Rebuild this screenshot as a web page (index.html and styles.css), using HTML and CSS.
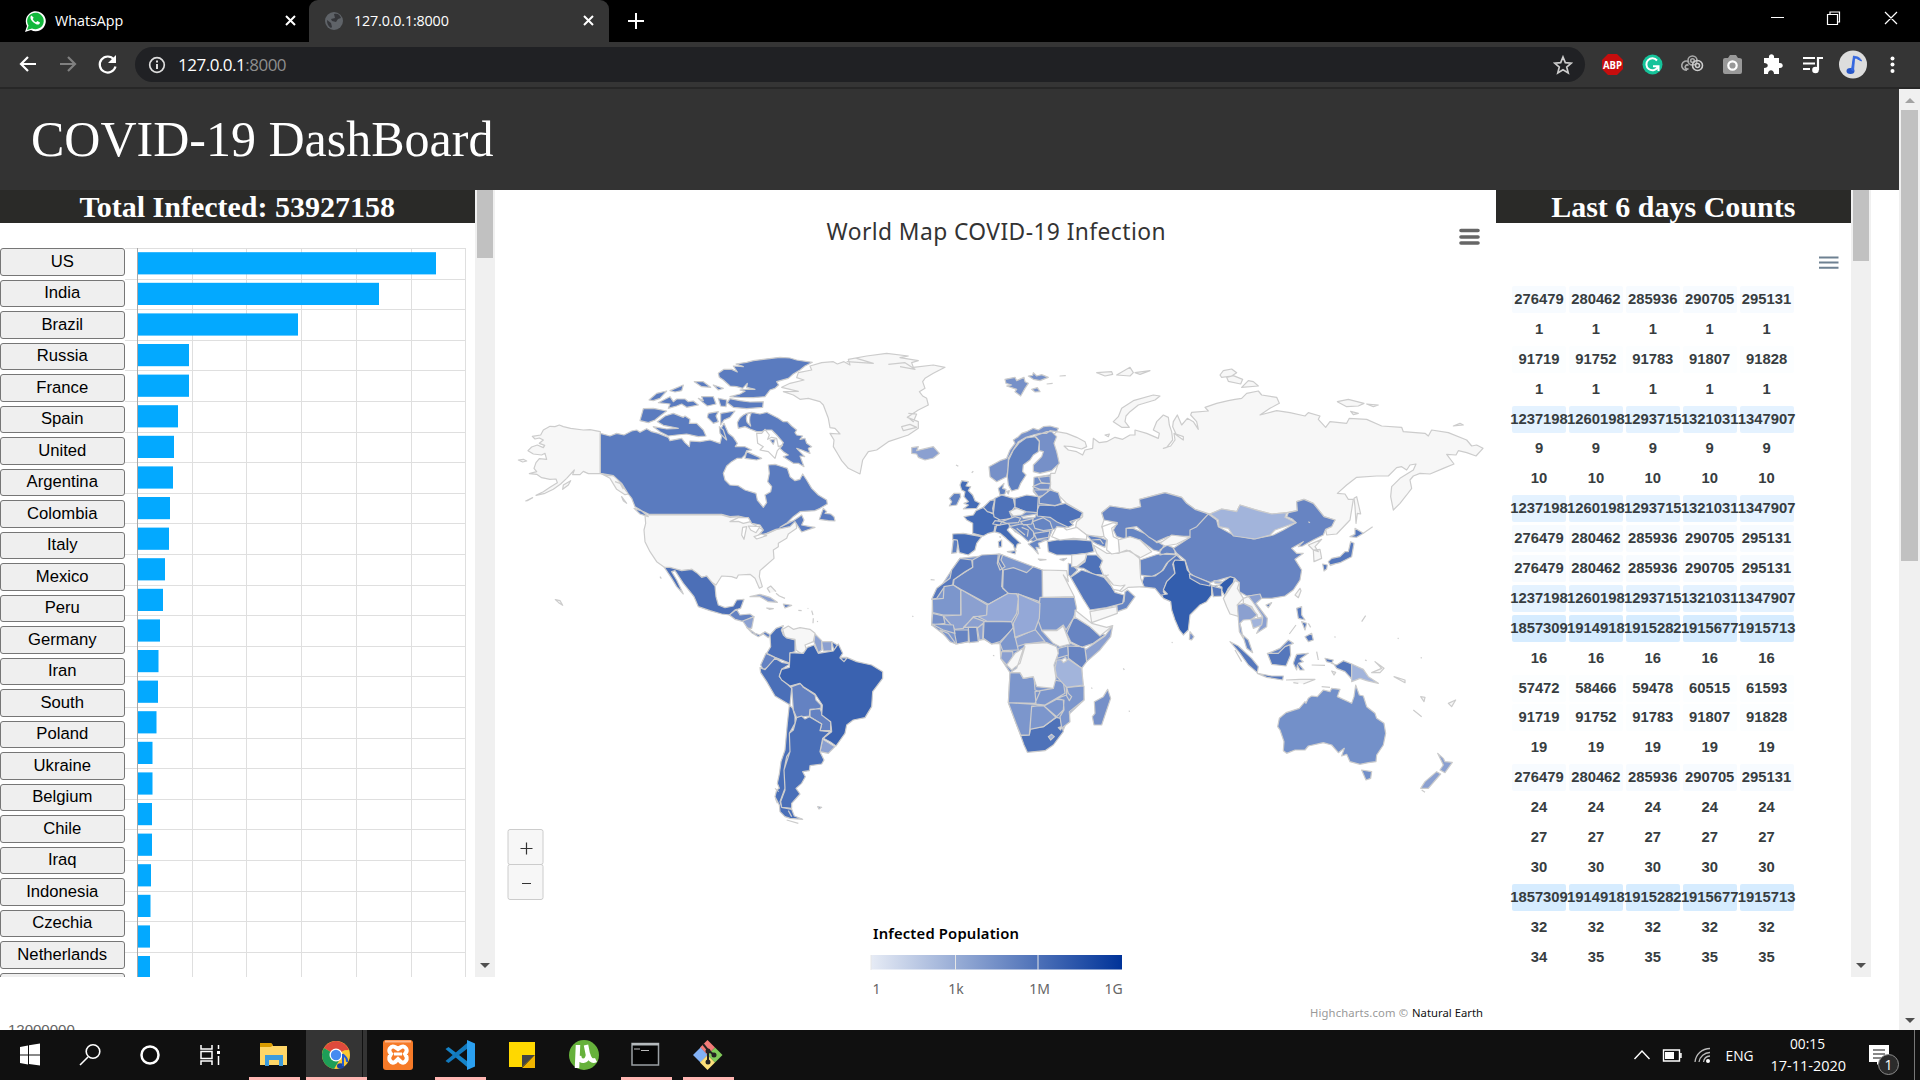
FILE: index.html
```html
<!DOCTYPE html>
<html lang="en">
<head>
<meta charset="utf-8">
<title>127.0.0.1:8000</title>
<link rel="stylesheet" href="styles.css">
</head>
<body>
<div class="tabs">
  <div class="tab first">
    <svg width="22" height="24" viewBox="0 0 22 24"><path d="M1 23l2-6A10 10 0 1 1 7 21z" fill="#fff"/><path d="M3 21l1.500-4.500A8.300 8.300 0 1 1 8 19.500z" fill="#12b83c"/><path d="M7.500 6.500c-2 1-1 4.500 2 7s6 3 6.500 0l-2.600-1.500-1.400 1.300c-1.400-.5-2.600-1.800-3.300-3.200l1-1.300z" fill="#fff"/></svg>
    <span>WhatsApp</span><svg class="x" width="11" height="11"><path d="M1 1l9 9M10 1l-9 9"/></svg>
  </div>
  <div class="tab active">
    <svg width="18" height="20" viewBox="0 0 18 20"><circle cx="9" cy="10" r="9" fill="#5f6368"/><path d="M9 3c4-1 6 1 7 4l-3 1-2 3-4-1-1-2 4-1zM2 9l4 3 1 4-1 1c-3-2-4-4-4-8z" fill="#35363a"/></svg>
    <span>127.0.0.1:8000</span><svg class="x" width="11" height="11"><path d="M1 1l9 9M10 1l-9 9"/></svg>
  </div>
  <svg class="plus" width="16" height="16"><path d="M8 0v16M0 8h16"/></svg>
  <svg class="win" width="140" height="20"><path d="M5 8.500h13M61.500 5.500h10v10h-10zM64 5.500v-2.500h9.500v10h-2M119 3l12 12M131 3l-12 12"/></svg>
</div>
<div class="toolbar">
  <svg class="nav" width="110" height="24"><g fill="none" stroke-width="2.200"><path stroke="#fff" d="M28 12H13M20 5l-7 7 7 7"/><path stroke="#808080" d="M52 12h15M60 5l7 7-7 7"/><path stroke="#fff" d="M106 7.500a8 8 0 1 0 1.500 7"/></g><path fill="#fff" d="M108 3v8h-8z"/></svg>
  <div class="omni">
    <svg width="18" height="18"><circle cx="9" cy="9" r="7.300" fill="none" stroke="#ddd" stroke-width="1.700"/><path d="M9 8v5M9 4.500v2" stroke="#ddd" stroke-width="2"/></svg>
    <span>127.0.0.1<i>:8000</i></span>
    <svg class="star" width="20" height="20" viewBox="0 0 20 20"><path d="M10 2l2.300 5.600 6 .5-4.600 3.900 1.500 5.900L10 14.700l-5.200 3.200 1.500-5.900L1.700 8.100l6-.5z" fill="none" stroke="#ccc" stroke-width="1.700"/></svg>
  </div>
  <svg class="ext" width="335" height="46">
    <path d="M23 12h9l6 6v9l-6 6h-9l-6-6v-9z" fill="#c70d0d"/><text x="27.500" y="26.700" font-size="11" font-weight="700" text-anchor="middle" fill="#fff" font-family="Open Sans" textLength="19" lengthAdjust="spacingAndGlyphs">ABP</text>
    <circle cx="67.500" cy="22.500" r="10" fill="#15c39a"/><path d="M72 18.500a6 6 0 1 0 .5 7M68 24.300h5.500V29" fill="none" stroke="#fff" stroke-width="2"/>
    <g fill="none" stroke="#aaa" stroke-width="1.600"><circle cx="107.500" cy="18.500" r="4.500"/><circle cx="107.500" cy="18.500" r="1.800"/><path d="M104 20a4.500 4.500 0 1 0-2 8M103.500 23.500a2 2 0 1 0 0 3"/><circle cx="112.500" cy="23.500" r="5" stroke="#ccc"/><circle cx="112.500" cy="23.500" r="2" stroke="#ccc"/></g>
    <path d="M138 18q0-2 2-2h3l2-3h6l2 3h1q3 0 3 2v12q0 2-2 2h-15q-2 0-2-2z" fill="#999"/><circle cx="147.500" cy="23.500" r="4.200" fill="none" stroke="#fff" stroke-width="2.200"/>
    <path d="M179 16h5c-1-5 6-5 5 0h5v5c5-1 5 6 0 5v6h-5c0-5-6-5-6 0h-4v-6c5 0 5-5 0-5z" fill="#fff"/>
    <path d="M218 16h12M218 21.500h12M218 27h7" stroke="#fff" stroke-width="2.200"/><circle cx="230.500" cy="28" r="3.300" fill="#fff"/><path d="M233 28V16h5" fill="none" stroke="#fff" stroke-width="2.200"/>
    <circle cx="268" cy="22.500" r="14" fill="#ddd"/><ellipse cx="265.500" cy="29" rx="4" ry="3" fill="#2857c8"/><path d="M268.500 29l1-13c3 0 4 2 7 3-2-5-6-4-8-5l-2 14z" fill="#3366e0" stroke="#3366e0"/>
    <g fill="#fff"><circle cx="307.500" cy="16.500" r="2"/><circle cx="307.500" cy="22.500" r="2"/><circle cx="307.500" cy="29" r="2"/></g>
  </svg>
</div>
<div class="page">
<div class="content">
  <div class="masthead">COVID-19 DashBoard</div>
  <div class="columns">
    <div class="panel left">
      <div class="body"><h2>Total Infected: 53927158</h2>
        <div class="bars"><div class="names" id="names"></div><svg id="bars" width="350" height="729"></svg></div>
      </div>
      <div class="scroll"><b></b><i class="down"></i></div>
    </div>
    <div class="mapbox">
<svg width="1001" height="840" viewBox="495 190 1001 840">
<defs><linearGradient id="scale"><stop offset="0" stop-color="#e6ebf5"/><stop offset="1" stop-color="#003399"/></linearGradient></defs>
<text class="title" x="826.500" y="240" textLength="339">World Map COVID-19 Infection</text>
<path d="M1462 230.500h17M1462 237h17M1462 243h17" stroke="#666" stroke-width="3.600" stroke-linecap="round" transform="translate(-1 0)"/>
<!-- North America -->
<g class="land" transform="translate(500 330) scale(.33333)">
<path class="n" d="M301,305L270,299 250,300 212,295 190,290 178,285 165,290 150,289 130,300 122,315 97,319 105,327 118,324 130,330 118,340 134,346 130,353 112,345 95,351 84,362 100,372 125,375 135,370 140,388 118,386 108,398 102,415 110,425 88,431 110,433 125,443 150,448 168,447 172,458 150,472 130,485 108,496 135,490 160,478 182,462 200,445 223,420 218,434 240,434 250,424 265,431 301,430Z M77,513L98,503 82,512Z M55,390L70,388 80,393 68,396Z M190,465L212,452 205,465 188,478Z M301,430L320,437 345,437 370,470 385,475 385,492 375,494 350,478 330,445Z M345,455L360,460 370,478 M355,450L380,485 M166,809L180,812 188,826 176,818Z M480,740L484,746"/>
<path class="n" d="M435,555L665,555 690,562 720,560 750,568 760,583 790,600 775,617 800,612 830,598 850,592 870,575 888,572 890,595 865,612 860,625 835,640 835,650 820,660 822,685 780,722 778,740 787,770 778,775 765,745 750,733 715,735 710,745 695,740 665,738 648,765 628,752 620,738 605,742 575,718 545,722 493,712 470,695 450,665 435,635 432,600 437,580Z"/>
<path fill="#5a7bbf" d="M301,310L330,318 350,310 372,315 395,303 410,300 420,307 440,296 455,305 475,310 505,322 510,332 545,325 555,338 568,350 570,333 600,335 630,330 660,340 665,320 660,300 672,280 685,310 700,322 712,340 706,350 735,350 755,360 740,362 735,375 725,385 712,385 695,395 680,408 670,430 675,450 690,465 715,467 735,480 768,490 772,510 790,532 800,518 795,495 812,485 815,470 803,455 808,430 805,405 825,403 840,408 862,415 870,440 885,452 900,448 908,432 920,450 935,475 955,495 980,510 982,522 960,535 945,542 900,545 880,560 862,578 840,592 880,572 905,555 912,570 905,585 930,590 945,592 905,606 898,595 885,575 870,590 845,595 828,598 800,610 775,617 790,600 780,585 755,580 745,565 715,558 690,560 665,553 447,553 430,545 405,530 395,505 385,492 365,460 340,437 301,430Z M958,568L970,535 980,545 975,550 992,552 1002,560 1005,573 985,572Z M402,535L425,543 445,560 420,552Z M365,500L380,520 370,512Z"/>
<path fill="#5a7bbf" d="M655,130L672,118 695,118 712,126 700,108 730,110 708,102 740,97 760,92 790,88 840,82 870,84 890,90 937,97 915,108 900,120 880,132 865,145 830,155 836,165 825,175 810,180 795,200 760,203 720,202 690,200 720,192 735,184 720,180 740,178 765,178 740,172 742,160 728,175 710,170 690,168 670,150 658,142Z M690,206L720,212 750,216 790,215 788,232 740,236 700,232 682,218Z M430,236L460,235 500,243 480,258 465,270 445,278 420,272Z M495,258L520,250 550,262 555,258 570,268 568,280 590,280 610,300 618,318 595,320 560,312 530,315 505,318 480,305 460,290 500,297 535,295 490,286 472,275Z M447,210L470,190 500,183 480,205 460,212Z M475,218L495,208 510,200 520,215 530,207 555,207 565,215 580,213 595,225 560,232 545,222 530,228 505,235 510,222Z M510,182L550,165 545,182 525,186Z M583,155L610,155 632,172 605,170Z M595,205L610,212 605,200 640,200 648,222 622,228 608,217Z M640,165L670,175 655,180Z M655,205L680,210 678,230 662,228Z M625,250L655,245 648,258 655,275 640,280 622,262Z M662,250L705,243 690,262 672,270 662,285Z M740,250L755,247 780,252 800,247 835,265 850,275 862,275 875,288 890,300 885,308 890,315 908,318 900,328 915,325 920,340 935,350 925,355 930,370 905,360 890,355 914,380 900,378 912,410 895,400 880,400 850,380 865,375 850,365 840,355 850,338 830,315 815,300 800,300 785,305 770,305 750,297 735,290 715,295 712,278Q720,258 740,250Z M740,365L785,385 770,390 735,385Z M658,290L670,300 680,330 660,310Z"/>
<path class="w" d="M770,310L785,310 795,298 808,315 803,328 815,322 830,325 835,350 848,345 832,362 825,385 805,365 780,360 790,350 773,340Z M690,575L715,563 745,563 752,575 730,580 715,574Z M728,592L740,590 732,628 725,615Z M745,588L780,590 768,608 752,600Z M762,620L785,612 800,617 770,627Z M745,250Q735,262 742,278L752,288Q745,268 753,250Z"/>
<path fill="#5a7bbf" d="M810,330L825,328 820,343Z"/>
<path class="n" d="M845,172L870,160 912,150 890,143 895,128 935,120 930,108 965,98 1000,95 1012,102 1032,95 1050,105 1045,88 1100,78 1160,70 1225,78 1200,83 1255,92 1235,98 1240,112 1300,105 1335,112 1300,130 1275,145 1268,155 1275,175 1258,185 1268,198 1280,205 1285,225 1255,240 1222,262 1255,275 1255,295 1225,315 1165,335 1130,360 1105,365 1088,390 1080,432 1045,415 1025,392 1015,375 1000,350 1002,330 990,310 1020,312 1005,295 990,293 985,265 970,225 960,215 925,205 900,208 880,195 850,185 895,184Z M1225,250L1250,252 1240,275 1222,260M1205,290L1230,283 1250,292 1210,302ZM1070,85L1120,100 1040,95M1165,103L1215,98 1245,118 1200,110"/>
<path fill="#8ba0d0" d="M1235,353L1255,350 1250,362 1275,356 1300,350 1318,370 1300,384 1275,390 1255,382 1250,372 1235,370Z"/>
<path fill="#4c6fb7" d="M493,712L510,712 545,722 575,718 590,728 605,742 620,738 645,768 648,800 655,825 675,833 700,828 710,810 732,808 722,835 705,840 690,855 665,852 630,842 595,830 582,800 550,760 525,722 515,725 530,750 550,792 530,770 515,745Z"/>
<path fill="#6482c2" d="M688,855L710,838 720,855 750,852 762,860 730,875 705,868Z"/>
<path fill="#8ba0d0" d="M728,873L762,860 755,895 743,895Z"/>
</g>
<!-- South America -->
<g class="land" transform="translate(740 570) scale(.33333)">
<path fill="#8ba0d0" d="M30,80L60,73 90,82 112,97 85,95 60,80Z M225,192L245,212 245,240 235,248 222,215Z M245,215L275,215 275,242 250,243Z M248,508L285,530 265,550 240,545Z"/>
<path fill="#6482c2" d="M130,102L155,106 135,114Z M80,114L100,116 88,118Z M20,172L45,190 60,195 75,185 92,195 85,203 70,192 55,200 35,188Z M155,350L182,340 190,352 225,375 228,390 243,405 243,416 210,418 208,438 170,443 160,420Z M210,420L240,415 248,435 272,455 272,482 240,482 245,462 210,440Z M78,250L105,262 100,280 70,300 62,285Z"/>
<path class="n" d="M128,178L145,168 160,178 180,173 210,178 225,190 220,215 195,225 200,240 185,252 168,240 165,208 135,203Z M90,68L82,55 92,48 108,65 M108,70L118,78 135,85"/>
<path fill="#4a6fb8" d="M108,175L130,167 124,180 130,195 140,204 165,210 165,245 150,250 150,280 105,262 80,250 92,230 90,195Z M275,215L292,225 282,242Z M60,293L75,299 105,265 125,277 150,282 125,298 118,320 145,345 155,355 150,405 105,378 80,335 62,308Z M170,443L185,438 195,447 208,440 245,462 240,482 270,485 248,505 240,545 252,570 245,582 210,587 208,602 188,605 196,620 185,640 168,655 180,672 155,700 155,715 125,712 122,695 135,660 132,600 140,560 150,545 148,490 160,480Z M148,405L158,415 165,440 165,460 148,490 150,545 132,600 135,655 120,695 125,712 155,718 163,738 188,748 150,745 135,740 120,725 118,705 105,680 110,660 118,655 112,640 118,612 123,575 135,540 142,460Z M105,655L116,665 M106,685L112,700 M140,750L175,760 M145,722L155,740 M233,710L245,712 237,717Z"/>
<path fill="#3a62b0" d="M150,248L190,250 202,232 222,225 235,250 280,243 295,222 308,250 300,262 320,262 350,275 395,285 428,305 428,325 398,365 395,410 375,443 340,450 320,465 315,490 288,528 270,515 250,505 275,485 272,455 245,435 247,405 225,372 190,350 180,340 150,348 125,330 118,318 125,298 148,292Z M300,264L322,263 312,275Z"/>
<path class="n" d="M215,122L219,135M220,145L219,160M175,121L185,122M203,115L205,116M232,153L233,156"/>
</g>
<!-- Europe, Africa and mainland Asia -->
<g class="land" transform="translate(900 340) scale(.33333)">
<path fill="#6f8cc6" d="M285,475L340,475 415,470 485,490 548,518 505,562 458,568 445,600 400,605 345,575 325,552 285,558 250,502Z M402,412L465,402 452,430 450,450 475,458 418,475 400,455Z"/>
<path fill="#7c96cc" d="M98,778L155,690 180,655 300,642 427,690 523,772 520,835 500,905 550,925 545,985 552,1080 510,1120 490,1170 470,1132 362,1187 325,1088 330,998 302,955 300,910 275,912 252,898 168,912 95,855Z"/>
<path class="n" d="M470,275L500,280 530,292 555,305 560,320 545,327 515,320 492,318 505,330 530,335 548,345 555,330 578,325 580,295 598,308 620,305 645,292 668,298 690,285 705,285 705,270 740,280 775,295 778,280 760,270 770,245 790,225 805,232 808,255 815,275 818,300 800,322 790,325 812,318 825,300 822,280 850,300 850,290 828,282 818,260 820,245 832,225 845,255 862,235 880,245 895,268 890,245 872,225 875,217 925,213 915,202 950,190 985,182 1005,178 1025,175 1040,160 1075,153 1085,165 1130,172 1138,190 1110,205 1080,225 1130,212 1170,218 1215,228 1225,218 1260,228 1255,238 1277,262 1290,245 1340,250 1348,235 1400,238 1445,258 1505,262 1510,275 1575,280 1585,288 1595,270 1645,278 1700,300 1715,318 1730,315 1749,325 1728,348 1700,338 1675,332 1668,345 1640,343 1662,372 1630,385 1590,402 1560,400 1540,408 1530,420 1535,445 1520,465 1500,490 1480,510 1472,470 1475,440 1500,415 1540,390 1548,372 1530,375 1520,390 1505,380 1490,383 1465,408 1430,408 1370,412 1340,435 1312,460 1335,462 1345,478 1360,478 1350,540 1310,582 1280,585 1277,568 1305,540 1272,530 1240,490 1212,478 1190,485 1192,512 1160,518 1115,522 1075,512 1020,495 1010,515 965,507 930,522 885,508 860,490 845,472 795,458 720,478 722,500 690,507 630,498 605,518 612,540 605,560 615,590 600,590 560,585 527,560 530,545 548,530 548,518 500,490 480,470 450,445 452,400 465,400 475,370 465,330 455,290Z M590,98L635,95 638,103 615,108Z M650,105L690,82 700,98 690,108Z M705,98L750,92 720,103Z M640,245L655,230 665,205 700,182 760,165 780,168 765,180 715,195 690,215 678,228 675,245 688,262 665,262Z M615,285L628,282 625,290Z M480,108L496,107Z"/>
<path class="n" d="M960,105L970,92 995,87 1010,98 995,108 965,112Z M980,112L1000,107 1028,118 1022,132 985,124Z M1025,142L1045,122 1060,125 1075,138Z M1312,185L1345,178 1392,190 1375,198 1340,200Z M1400,192L1435,195 1420,200Z M1352,214L1375,220 1360,224Z M1660,258L1680,250 1690,255Z M1362,475L1370,470 1382,522 1372,520 1368,550 1365,500Z M1225,615L1265,598 1245,620 1255,635 1240,630Z M1240,630L1260,628 1265,655 1242,665Z M1185,765L1200,745 1203,752 1195,773Z"/>
<path fill="#8ba0d0" d="M638,857L632,890 600,930 560,965 555,930 590,905 615,888Z M182,748L262,795 260,828 220,830 190,865 165,868 130,828 183,825Z M305,935L338,935 340,960 320,975 302,955Z M345,895L405,868 435,905 375,912 350,920Z M232,865L250,850 248,898 238,900Z M190,862L220,832 255,845 235,862Z"/>
<path fill="#7690c8" d="M315,118L345,112 350,122 372,112 375,125 385,130 375,145 362,168 345,155 350,148 320,138 335,135 318,130Z M385,108L398,106 400,98 410,108 425,104 445,112 420,122 400,118Z M395,148L412,143 420,155 405,156Z M267,380L300,362 320,355 330,330 345,310 340,300 355,290 365,280 380,275 400,265 415,270 430,260 450,258 475,265 470,275 450,272 440,280 420,280 400,285 378,292 355,305 340,330 325,355 325,385 320,410 290,425 270,410Z M405,288L440,275 455,275 470,290 462,310 470,335 478,370 455,392 420,400 400,395 400,375 425,350 430,335 418,332 418,303Z M415,412L450,408 452,430 425,430Z M398,440L425,428 452,432 448,448 420,448Z M400,450L445,450 438,465 415,470Z M870,875L882,890 875,900 868,898Z M623,1048L632,1075 605,1155 582,1155 577,1130 585,1120 583,1085 610,1070Z M98,820L130,828 135,850 95,855Z"/>
<path fill="#5f80c0" d="M322,410L326,360 340,330 358,308 378,294 405,290 418,305 415,335 400,345 390,360 370,375 368,395 378,405 362,430 355,447 335,453 325,435Z M295,445L312,430 308,445 318,448 315,462 300,465Z M320,455L328,452 325,462Z M148,475L162,460 180,460 182,470 170,495 148,498 155,485Z M160,598L175,600 170,638 155,640Z"/>
<path fill="#456cb6" d="M180,435L185,422 205,425 198,438 212,440 205,452 218,465 225,482 240,490 230,505 190,507 205,495 192,490 205,485 192,470 195,455 185,450Z M192,530L220,525 228,512 250,502 275,520 298,532 290,555 285,575 265,580 250,588 218,580 218,550 200,540Z M158,582L190,580 245,590 230,610 225,630 205,645 178,638 172,600 158,598Z M282,575L285,558 325,550 330,560 322,570 340,590 362,610 352,612 345,632 340,615 318,595 300,580Z M322,635L348,632 345,642Z M295,605L305,600 305,620 297,622Z M298,590L303,592"/>
<path fill="#4e72b9" d="M285,475L305,465 340,475 345,500 330,520 338,535 300,540 282,530 278,505Z M250,502L270,482 285,478 280,520 262,515Z M345,475L380,465 415,470 412,518 375,515 345,502Z M278,552L285,542 305,545 300,555Z M412,510L418,495 465,497 495,490 548,518 540,535 510,545 520,555 505,562 470,545 450,532 412,528Z M442,605L470,600 520,598 575,603 582,635 560,640 520,645 470,645 445,635Z M560,645L590,645 608,662 600,680 610,705 580,703 550,685 530,683 555,665Z M362,1187L388,1185 392,1165 430,1160 470,1132 482,1135 490,1175 460,1215 435,1232 382,1237 372,1215Z"/>
<path fill="#6685c3" d="M418,475L450,450 475,458 485,490 465,497 418,490Z M305,545L345,530 362,535 355,548 320,550Z M362,545L400,535 395,552 370,555Z M398,545L430,533 450,545 458,568 430,572 405,565Z M402,580L450,573 445,592 410,598Z M328,560L362,552 380,555 400,575 402,590 385,605 368,590 345,570Z M350,565L375,585M365,562L385,570 382,590M385,612L410,600 440,600 415,610 420,625 408,622 415,642 400,625Z M560,585L600,592 620,600 615,622 590,612 575,603Z M575,600L600,598 610,612M505,670L515,672 533,690 512,710 505,705Z M650,795L672,785 675,755 683,750 705,770 680,805 652,815Z M720,660L775,642 840,645 800,670 785,695 755,710 722,705Z M678,565L700,565 745,585 770,608 800,605 780,635 760,630 720,600 678,595Z M780,630L800,615 825,625 825,642 800,640 780,645Z M480,658L500,655 490,662Z M415,657L438,659 420,661Z"/>
<path fill="#6784c2" d="M605,518L630,498 690,507 722,500 718,478 795,458 845,472 860,490 885,508 925,522 890,560 870,570 870,588 805,590 770,605 745,590 710,560 678,565 678,598 650,590 640,570 652,548 612,540Z M925,522L950,540 955,560 1000,585 1060,597 1120,585 1150,570 1188,548 1178,538 1160,530 1165,518 1192,512 1190,485 1212,478 1240,490 1272,530 1305,540 1295,560 1277,568 1270,585 1240,600 1208,618 1195,620 1210,605 1175,625 1190,640 1210,640 1185,658 1205,690 1200,720 1180,750 1155,768 1115,775 1085,775 1070,765 1040,768 1018,755 1018,730 1005,715 985,712 930,728 870,705 855,660 830,640 820,625 870,592 870,570 890,560Z M218,660L245,645 300,642 295,665 308,690 305,740 325,760 265,793 182,748 160,735 162,718 218,682Z M295,642L308,645 303,660 315,680 300,690 292,670Z M310,690L340,683 380,698 400,680 427,690 427,788 355,762 325,760 308,745Z M520,835L550,833 575,865 615,885 580,910 545,922 512,905 500,880Z M503,918L545,920 555,925 560,965 545,985 505,955Z M252,845L335,845 340,865 300,905 275,912 250,895Z M205,862L230,862 235,905 208,908Z M162,870L205,870 205,905 170,912Z"/>
<path fill="#5778bc" d="M512,712L545,690 612,712 635,740 645,757 672,765 668,790 620,803 570,810 548,775Z M722,740L732,710 765,708 790,690 805,665 830,645 845,660 818,672 825,700 800,725 790,755 805,778 785,770 765,745Z M180,655L215,660 218,682 195,695 160,720 158,735 130,745 110,775 95,778 110,745 150,715 155,690Z"/>
<path fill="#7c96cc" d="M97,778L130,775 132,740 160,735 182,750 182,825 130,825 98,818Z M420,772L523,772 530,805 520,835 498,870 490,855 470,870 425,870 412,835 418,790Z M475,925L503,918 505,945 470,955Z M95,852L160,855 165,880 130,870Z M120,870L145,880 168,912 150,905Z M300,910L340,862 345,890 355,930 308,932Z M330,998L360,998 370,1015 402,1010 405,1050 420,1055 405,1090 325,1088Z M405,1055L460,1045 460,1020 490,1025 495,1060 435,1095 408,1092Z M500,1042L552,1038 552,1080 508,1115 510,1145 485,1165 480,1130 492,1110 490,1080 470,1075 500,1065Z M432,1098L470,1078 492,1080 490,1110 470,1130Z M395,1098L432,1098 468,1132 430,1160 390,1168Z M325,1088L430,1095 395,1100 388,1185 362,1185 348,1150Z M498,1035L505,1060 515,1070 508,1082 500,1068Z"/>
<path fill="#94a8d7" d="M262,795L325,760 350,762 355,775 350,820 335,845 260,843 235,830 260,825Z M355,762L420,790 418,835 405,870 345,892 340,850 355,820Z"/>
<path fill="#a2b4db" d="M470,960L505,958 545,985 550,1035 500,1042 470,1010 465,985Z M445,1190L455,1183 463,1190 452,1200Z M930,522L965,507 1010,515 1020,495 1075,512 1115,522 1160,518 1155,532 1188,548 1125,570 1110,585 1065,597 1000,588 985,565 957,560 955,540Z"/>
<path class="n" d="M328,515L350,505 378,515 365,525 340,528Z M365,530L410,522 405,532 370,535Z M515,645L560,640 555,660 530,680 515,680Z M570,815L650,800 652,820 575,848Z M580,615L620,640 655,640 680,630 718,650 722,715 732,740 685,742 665,755 640,745 615,708 625,705 612,708 600,680 608,662 590,640Z M655,600L690,590 720,600 755,635 718,655 690,632 658,638Z M780,610L815,585 870,592 830,612 795,618Z M427,690L500,692 505,725 490,705 523,770 428,772Z M525,810L575,850 620,862 638,857 600,888 570,860 525,832Z M425,872L470,872 490,858 500,885 510,912 480,920 460,910Z M375,912L440,908 470,920 475,940 462,975 468,1015 460,1045 410,1040 400,1010 370,1015 360,998 330,998 350,985Z M320,975L345,940 375,920 360,970 335,990Z"/>
<path class="w" d="M615,705L640,735 662,738 675,735 660,752 640,748Z"/>
<path fill="#335eae" d="M820,668L825,660 855,662 862,690 870,700 905,725 935,735 945,745 970,724 990,710 1003,714 1000,728 985,745 974,767 965,752 966,742 955,735 935,738 935,765 920,785 900,795 870,825 865,870 850,885 838,870 825,840 815,810 812,785 790,775 785,765 802,762 790,750 800,725 825,700Z"/>
<path fill="#5778bc" d="M868,702L930,728 930,738 900,732 870,715Z M935,738L965,745 965,768 940,770Z"/>
<path fill="#a2b4db" d="M942,722L965,724 962,731 945,730Z"/>
<path class="w" d="M607,560L640,548 652,552 635,565 640,590 655,598 658,638 635,642 620,630 622,600 612,590Z M455,590L470,560 490,562 500,570 530,562 560,585 560,598 520,595 480,600Z"/>
<path class="n" d="M92,719L104,720M37,828L40,830M279,946L283,948M670,985L673,990M686,1113L690,1114M574,1043L577,1046M815,907L818,908M168,375L175,379M215,398L220,394M440,132L458,130M484,960L497,952 500,962 490,968Z M475,1163L485,1160 482,1170Z"/>
</g>
<!-- East Asia and Oceania -->
<g class="land" transform="translate(1180 340) scale(.33333)">
<path fill="#5577bc" d="M445,665L455,655 480,650 495,635 505,635 512,605 522,610 515,650 480,668 450,675Z M428,672L442,675 440,687 432,693Z M450,677L465,672M510,590L525,583 525,565 550,580 530,592Z M150,905L175,918 215,955 235,980 232,998 205,975 180,940Z M232,1000L275,1008 310,1008 308,1020 260,1012Z M262,940L290,940 315,918 330,915 332,945 318,978 275,973Z M345,955L350,943 385,940 360,957 370,965 355,970 372,990 360,990 352,975 350,990 340,970Z M435,955L460,960 455,970 470,975 490,962 515,972 515,1017 495,995 470,985 460,970 440,965Z M350,805L365,800 365,825 375,840 355,835Z M365,845L380,850 375,870Z M385,850L392,862M375,890L395,880 400,900 385,905Z M258,795L275,788 265,803Z M385,545L390,548"/>
<path class="n" d="M130,775L150,745 165,722 178,727 172,745 190,775 172,795 178,830 150,822 140,800Z M190,775L205,770 220,785 248,830 235,835 215,800 190,790Z M550,580L578,560 M328,882L348,855M318,1020L360,1018 405,1018 370,1032M340,1028L355,1030M395,975L435,976M410,935L415,960M455,993L467,997 462,1005ZM585,965L612,985 600,998 575,998 605,985ZM642,1010L675,1020 675,1028ZM722,1070L735,1072 732,1085ZM700,1110L725,1130M805,1090L827,1080 815,1100ZM545,845L557,827M463,890L467,892M722,953L726,954M653,894L656,896M175,838L185,870M165,930L185,965M555,960L560,962M425,1040L450,1042M725,1350L735,1357"/>
<path fill="#8ba0d0" d="M172,795L190,790 210,800 232,825 215,838 190,840 180,850 190,895 178,875Z M205,768L240,762 245,775 228,790 262,835 260,860 230,880 245,850 248,830 225,795Z M773,1240L790,1255 795,1265 817,1267 795,1298 780,1290 790,1275Z M770,1295L782,1302 745,1345 722,1345 735,1325Z"/>
<path fill="#a2b4db" d="M212,838L248,833 245,855 220,865Z M515,972L550,988 565,1010 595,1030 560,1022 540,1015 515,1025Z"/>
<path fill="#6685c3" d="M188,885L205,900 218,938 200,925Z M265,940L300,925 325,900 340,910 315,920 295,940Z"/>
<path fill="#7390c9" d="M298,1135L318,1118 358,1105 375,1085 378,1090 385,1075 395,1068 412,1070 430,1050 450,1055 455,1045 480,1048 472,1070 515,1090 522,1070 527,1035 538,1065 550,1068 560,1100 585,1120 590,1135 612,1150 617,1180 610,1215 590,1245 588,1265 565,1268 540,1273 510,1265 500,1243 485,1248 493,1225 475,1238 455,1215 430,1208 385,1218 375,1230 345,1230 320,1240 310,1232 312,1205 300,1170 293,1160Z M545,1290L575,1295 572,1315 558,1320Z"/>
</g>
<!-- Zoom buttons -->
<rect x="508" y="829.500" width="35" height="35" rx="2" fill="#f7f7f7" stroke="#ccc"/><rect x="508" y="864.500" width="35" height="35" rx="2" fill="#f7f7f7" stroke="#ccc"/>
<path d="M520.500 848.500h12M526.500 842.500v12M522 883.500h9" stroke="#333" stroke-width="1.200"/>
<!-- Colour axis -->
<text class="legend" x="873" y="939" textLength="146">Infected Population</text>
<rect x="871" y="955" width="251" height="14.500" fill="url(#scale)"/><path d="M955.500 955v15M1038 955v15M871 955v15" stroke="#e6e6e6"/>
<g class="tick"><text x="876.500" y="994">1</text><text x="956" y="994">1k</text><text x="1039.500" y="994">1M</text><text x="1113.500" y="994">1G</text></g>
<g class="credit"><text x="1310" y="1017" textLength="98" fill="#999">Highcharts.com ©</text><text x="1412" y="1017" textLength="71" fill="#111">Natural Earth</text></g>
</svg>
    </div>
    <div class="panel right">
      <div class="body"><h2>Last 6 days Counts</h2>
        <svg class="menu" width="20" height="14"><path d="M0 1.500h19.500M0 6.500h19.500M0 11.700h19.500" stroke="#6e8192" stroke-width="2"/></svg>
        <div class="heat" id="heat"></div>
      </div>
      <div class="scroll"><b></b><i class="down"></i></div>
    </div>
  </div>
  <div class="cut">12000000</div>
</div>
<div class="pagescroll"><i class="up"></i><b></b><i class="down"></i></div>
</div>
<div class="taskbar">
<svg width="760" height="50">
<rect x="306" width="61" height="50" fill="#343434"/><rect x="362" width="1" height="50" fill="#111"/>
<g fill="#ffb6b2"><path d="M249 47h51v3h-51zM306 47h61v3h-61zM435 47h51v3h-51zM621 47h51v3h-51zM683 47h51v3h-51z"/></g>
<path fill="#fff" d="M20 17l8-1.500v9h-8zM29 15.300l11-1.800v11H29zM20 25.500h8v9L20 33zM29 25.500h11v10L29 34z"/>
<g fill="none" stroke="#fff"><circle cx="93" cy="21.500" r="6.800" stroke-width="1.600"/><path d="M88 27l-8 8" stroke-width="1.600"/><circle cx="150" cy="25" r="8.500" stroke-width="2.500"/><path d="M201 15v4h11v-4M201 35v-4h11v4M201 21.500h11v7h-11zM218.500 15v4M218.500 26v9" stroke-width="1.500"/></g><path fill="#fff" d="M217 21h3v3h-3z"/>
<path d="M260 13h11l2 3h14v19h-27z" fill="#ffd667"/><path d="M260 13h11l2 2-2 2h-11z" fill="#d99b00"/><path d="M265 36V25h18v11h-4v-6h-10v6z" fill="#3c9bdc"/>
<circle cx="336" cy="25" r="14" fill="#fbc934"/><path d="M336 25L323.900 18A14 14 0 0 1 348.100 18z" fill="#de4a3c"/><path d="M336 25L323.900 18A14 14 0 0 0 334 38.900l6-10z" fill="#1e9e58"/><path d="M336 18h12.100l.5 2-12 .5z" fill="#de4a3c"/><circle cx="336" cy="25" r="6.500" fill="#fff"/><circle cx="336" cy="25" r="5.200" fill="#468af0"/><ellipse cx="340.500" cy="36" rx="3.500" ry="2.800" fill="#1c45a0"/><path d="M343 36V24c1 3 5 3 4 8" fill="none" stroke="#245bd1" stroke-width="2"/>
<rect x="383" y="10" width="30" height="30" rx="3" fill="#f67a28"/><path d="M385 11.500h26" stroke="#ffb98c" stroke-width="2"/><path d="M391 24c-4-4 0-9 4-7l3 2 3-2c4-2 8 3 4 7 4 5 0 10-4 8l-3-3-3 3c-4 2-8-3-4-8z" fill="none" stroke="#fff" stroke-width="4"/><path d="M394 24h8" stroke="#fff" stroke-width="3"/>
<path d="M445.500 19l3-2 21 16v6z" fill="#1583c8"/><path d="M445.500 31l3 2 21-16v-6z" fill="#1279bd"/><path d="M467 10l8 3.500v23L467 40z" fill="#2ba0f0"/>
<path d="M509 12h26v13l-13 12h-13z" fill="#ffd800"/><path d="M522 37V25h13z" fill="#444"/><path d="M535 25v13h-13z" fill="#f0b400"/>
<circle cx="584" cy="25" r="15" fill="#66b13b"/><path d="M578 15l-1 23M579 26c1 7 8 6 9-1l-2-10M588 24c1 5 4 8 8 6" fill="none" stroke="#fff" stroke-width="4.500"/>
<rect x="632" y="13.500" width="26.500" height="21.500" fill="#050505" stroke="#9aa0a4" stroke-width="1.500"/><path d="M632 13h27v2.500h-27z" fill="#b5babd"/><path d="M634 19h6M641 20.500h8" stroke="#bbb"/>
<path d="M707.500 10l7.500 7.500-7.500 7.500-7.500-7.500z" fill="#f37b78"/><path d="M700.500 17.500l7 7.500-7 7.500-7.500-7.500z" fill="#82b1f5"/><path d="M715 17.500l7.500 7.500-7.500 7.500-7.500-7.500z" fill="#80c95a"/><path d="M707.500 25l7.500 7.500-7.500 7.500-7.500-7.500z" fill="#fce07a"/><path d="M703 14l5 6v12M708 20l6 5" fill="none" stroke="#222" stroke-width="2"/><circle cx="708" cy="21" r="2.500" fill="#222"/><circle cx="714" cy="25" r="2.500" fill="#222"/><circle cx="708" cy="32" r="2.500" fill="#222"/>
</svg>
<svg class="tray" width="290" height="50">
<path d="M4.500 29l7.500-8 7.500 8" fill="none" stroke="#fff" stroke-width="1.400"/><path d="M33.500 20h16v11h-16zM51 23v5" fill="none" stroke="#fff" stroke-width="1.400"/><path fill="#fff" d="M35 22h9v7h-9z"/>
<path d="M65 32a15 15 0 0 1 15-13.500M69 32a11 11 0 0 1 11-9.500M73.500 32a7 7 0 0 1 6.500-6" fill="none" stroke="#bbb" stroke-width="1.300"/><circle cx="78" cy="31" r="2" fill="#fff"/>
<g font-family="Open Sans, sans-serif" fill="#fff"><text x="95.500" y="31" font-size="15" textLength="28" lengthAdjust="spacingAndGlyphs">ENG</text><text x="160" y="18.500" font-size="15" textLength="35" lengthAdjust="spacingAndGlyphs">00:15</text><text x="140.500" y="41.300" font-size="15" textLength="75.500" lengthAdjust="spacingAndGlyphs">17-11-2020</text>
<path d="M239 15h20v17h-9l-3 3v-3h-8z"/><path d="M243 20h12M243 24h12M243 28h8" stroke="#111"/><circle cx="258.500" cy="34.500" r="10" fill="#2b2b2b" stroke="#8c8c8c"/><text x="258.500" y="39.500" font-size="14" text-anchor="middle">1</text></g><path d="M284.500 0v50" stroke="#777"/>
</svg>
</div>
<script src="app.js"></script>
</body>
</html>
```
FILE: styles.css
```css
* { box-sizing: border-box; }
body { margin: 0; width: 1920px; height: 1080px; overflow: hidden; background: #fff; display: flex; flex-direction: column; }
svg { display: block; flex: none; }
.tabs { height: 42px; background: #000; display: flex; color: #fff; font: 14.3px "Open Sans", sans-serif; }
.tab { display: flex; align-items: center; height: 42px; padding-bottom: 1px; }
.tab span { flex: 1; }
.tab.first { width: 309px; padding: 0 13.5px 1px 24px; gap: 9px; }
.tab.active { width: 300px; padding: 0 15px 1px 16px; gap: 11px; background: #353535; border-radius: 9px 9px 0 0; }
.tab.active span { letter-spacing: -.15px; }
.x { stroke: #fff; stroke-width: 2; }
.plus { margin: 13px 0 0 19px; stroke: #fff; stroke-width: 2; }
.win { margin: 9px 14px 0 auto; width: 140px; fill: none; stroke: #fff; stroke-width: 1.2; }
.toolbar { height: 47px; background: #353535; border-bottom: 2px solid #272727; display: flex; }
.nav { margin: 10px 0 0 8px; }
.omni { width: 1450px; height: 35px; margin: 5px 0 0 17px; border-radius: 18px; background: #202124; display: flex; align-items: center; padding: 0 12.5px 0 13px; gap: 12px; color: #fff; font: 17px "Open Sans", sans-serif; }
.omni span { flex: 1; letter-spacing: -.5px; }
.omni i { font-style: normal; color: #8e8e8e; }
.page { height: 941px; display: flex; overflow: hidden; }
.content { width: 1899px; height: 941px; overflow: hidden; }
.masthead { height: 101px; background: #333; color: #fff; font: 50px/100px "Liberation Serif", serif; padding: 0 0 0 31px; }
.columns { display: flex; height: 840px; }
.panel { height: 787px; display: flex; overflow: hidden; }
.left { width: 495px; }
.right { width: 375px; }
.body { flex: 1; overflow: hidden; }
h2 { margin: 0; height: 33px; background: #2a2a28; color: #fff; text-align: center; font: bold 30px/33px "Liberation Serif", serif; }
.scroll { width: 20.5px; background: #f0f0f0; position: relative; padding: 0 2px; }
.scroll b { display: block; height: 68px; background: #c1c1c1; }
.right .scroll b { height: 71px; }
.down, .up { display: block; width: 0; height: 0; border: 5px solid transparent; border-top-color: #505050; border-bottom: 0; }
.scroll .down { position: absolute; left: 5px; bottom: 9px; }
.up { border-top: 0; border-bottom: 5px solid #a3a3a3; }
.pagescroll { width: 21px; background: #f0f0f0; display: flex; flex-direction: column; align-items: center; padding: 9px 0 7px; }
.pagescroll b { width: 17px; height: 451px; margin-top: 7px; background: #c1c1c1; }
.pagescroll .down { margin-top: auto; }
.bars { margin-top: 25px; display: flex; }
.names { width: 125px; display: flex; flex-direction: column; gap: 4px; }
.name { height: 27.5px; flex: none; border: 1.25px solid #767676; border-radius: 3px; background: #efefef; color: #000; font: 16.67px "Liberation Sans", sans-serif; padding: 0; }
.mapbox { width: 1001px; height: 840px; }
.right .body { width: 354px; }
.menu { margin: 33px 0 0 323px; }
.heat { margin: 16px 0 0 16px; display: grid; grid-template-columns: repeat(5, 54px); column-gap: 2.9px; row-gap: 2.9px; }
.heat span { position: relative; height: 27px; display: flex; justify-content: center; font: bold 14.8px/27px "Liberation Sans", sans-serif; color: #373d3f; border-radius: 2px; white-space: nowrap; }
.a { background: #f7fbff; }
.b { background: #fcfeff; }
.c { background: #e4f2ff; }
.d { background: #d6ecff; }
.cut { position: relative; margin: -8px 0 0 8px; font: 15px/15px "Liberation Sans", sans-serif; color: #666; }
.title { font: 22.8px "Noto Sans", sans-serif; fill: #333; }
.legend { font: 600 14.8px "Noto Sans", sans-serif; }
.tick { font: 14px "Noto Sans", sans-serif; fill: #666; text-anchor: middle; }
.credit { font: 11.25px "Noto Sans", sans-serif; }
.land path { stroke: #ccc; stroke-width: 3.6; stroke-linejoin: round; }
.land .n { fill: #f7f7f7; }
.land .w { fill: #fff; }
.taskbar { height: 50px; background: #101010; display: flex; justify-content: space-between; }
```
FILE: app.js
```js
const names = ["US","India","Brazil","Russia","France","Spain","United","Argentina","Colombia","Italy","Mexico","Peru","Germany","Iran","South","Poland","Ukraine","Belgium","Chile","Iraq","Indonesia","Czechia","Netherlands",""];
document.getElementById("names").innerHTML = names.map(n => `<button class="name">${n}</button>`).join("");

const ends = [436,379,298,189,189,178,174,173,170,169,165,163,160,158.5,158,156.5,152.5,152.5,152,152,151,150.5,150,150];
let chart = "";
[192.5,246.5,301.5,356.5,411.5,465.5].forEach(x => chart += `<path d="M${x-125} 0v729" stroke="#dfdfdf"/>`);
ends.forEach((e, i) => {
  const y = Math.round(i * 30.6) + .5;
  chart += `<path d="M0 ${y}h341" stroke="#dfdfdf"/>`;
});
ends.forEach((e, i) => chart += `<rect x="12.5" y="${(i*30.6+4.2).toFixed(1)}" width="${e-137.5}" height="22.2" fill="#03a9ff"/>`);
chart += `<path d="M12.5 0v729" stroke="#a8a8a8"/>`;
document.getElementById("bars").innerHTML = chart;

const A = [276479,280462,285936,290705,295131], B = [91719,91752,91783,91807,91828],
      C = [1237198,1260198,1293715,1321031,1347907], D = [1857309,1914918,1915282,1915677,1915713];
const same = n => Array(5).fill(n);
const rows = [A,same(1),B,same(1),C,same(9),same(10),C,A,A,C,D,same(16),[57472,58466,59478,60515,61593],B,same(19),A,same(24),same(27),same(30),D,same(32),[34,35,35,35,35]];
const tone = r => r === A ? "a" : r === C ? "c" : r === D ? "d" : r[0] > 1000 ? "b" : "";
document.getElementById("heat").innerHTML = rows.map(r => r.map(v => `<span class="${tone(r)}">${v}</span>`).join("")).join("");
```
